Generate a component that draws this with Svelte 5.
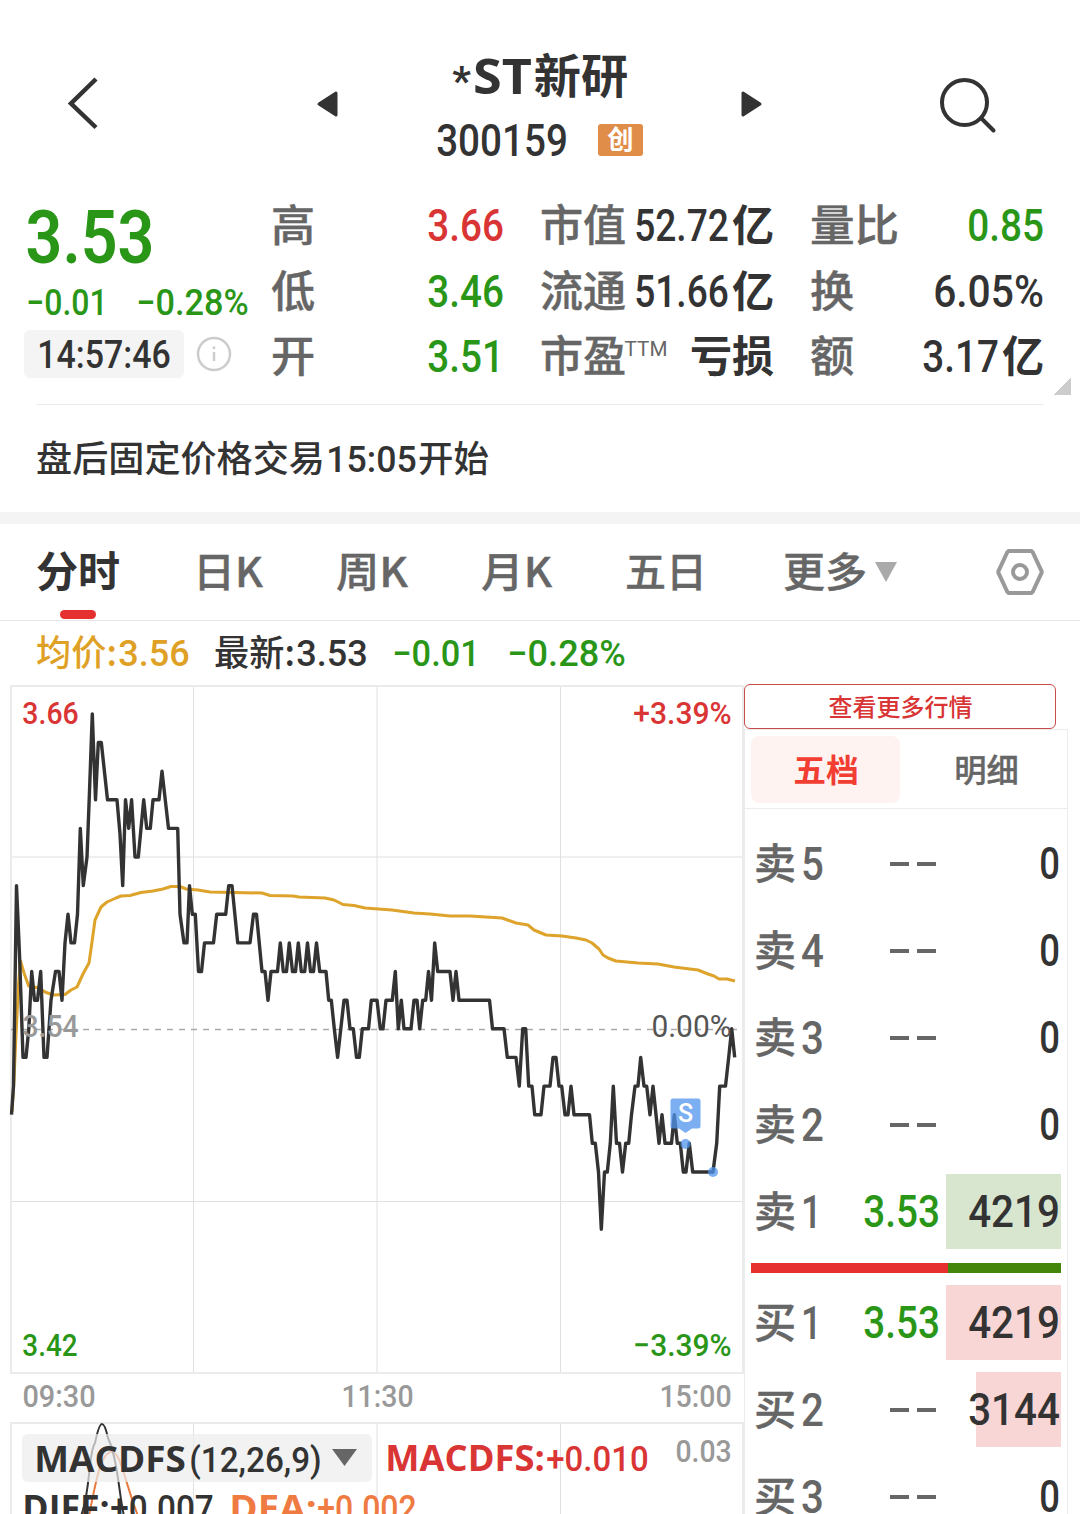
<script lang="ts">
  type Point = [number, number];

  const stats = [
    [
      { label: "高", lw: 42, value: "3.66", vw: 75, tone: "red" },
      { label: "低", lw: 42, value: "3.46", vw: 75, tone: "green" },
      { label: "开", lw: 42, value: "3.51", vw: 75, tone: "green" },
    ],
    [
      { label: "市值", lw: 84, value: "52.72", vw: 93, unit: "亿", uw: 40, tone: "dark" },
      { label: "流通", lw: 84, value: "51.66", vw: 93, unit: "亿", uw: 40, tone: "dark" },
      { label: "市盈", lw: 84, sup: "TTM", unit: "亏损", uw: 82, tone: "dark" },
    ],
    [
      { label: "量比", lw: 87, value: "0.85", vw: 75, tone: "green" },
      { label: "换", lw: 42, value: "6.05%", vw: 109, tone: "dark" },
      { label: "额", lw: 42, value: "3.17", vw: 75, unit: "亿", uw: 40, tone: "dark" },
    ],
  ];

  const asks = [
    { side: "卖", level: "5", volume: "0" },
    { side: "卖", level: "4", volume: "0" },
    { side: "卖", level: "3", volume: "0" },
    { side: "卖", level: "2", volume: "0" },
    { side: "卖", level: "1", price: "3.53", volume: "4219", depth: 115 },
  ];
  const bids = [
    { side: "买", level: "1", price: "3.53", volume: "4219", depth: 115 },
    { side: "买", level: "2", volume: "3144", depth: 85 },
    { side: "买", level: "3", volume: "0" },
  ];

  // x, ticks above or below the previous close
  const ticks: Point[] = [
    [11.5, -3], [13.5, -2], [16.5, 5], [19.5, 2.6], [23, -1], [26, -1], [28.8, 0], [31.7, 2], [34.5, 1],
    [37.5, 1], [40.7, 2], [44, -1], [47, -1], [51, 1], [55.5, 2], [59, 2], [62, 1], [65, 3], [68, 4],
    [71, 3], [74.5, 3], [77.5, 4], [80.3, 7], [83.3, 5], [87, 6], [89.5, 8.3], [92.3, 11], [95.5, 8],
    [98.3, 10], [101.3, 10], [107.5, 8], [117, 8], [120, 6.8], [122.7, 5], [125.5, 8], [128.7, 7],
    [131.6, 8], [135, 6], [138.3, 6], [143.7, 8], [146.7, 7], [150.3, 7], [153, 8], [159, 8], [162, 9],
    [168.5, 7], [177.7, 7], [180, 4], [184, 3], [187, 3], [189.5, 5], [192.3, 4], [195.3, 4],
    [198.5, 2], [201.5, 2], [204.5, 3], [213.5, 3], [216.7, 4], [225.7, 4], [228.7, 5], [232, 5],
    [237.7, 3], [250, 3], [253.5, 4], [256.5, 4], [262, 2], [265, 2], [268, 1], [271, 2], [277.5, 2],
    [280.3, 3], [283.3, 2], [286.5, 2], [289.3, 3], [292.5, 2], [295.5, 2], [298.3, 3], [301.3, 2],
    [304.7, 2], [307.5, 3], [310.5, 2], [313.5, 2], [316.5, 3], [319.7, 2], [326, 2], [328.7, 1],
    [331.3, 1], [334.3, 0], [337.6, -1], [340.8, 0], [344, 1], [347, 1], [350, 0], [353.3, 0],
    [356.5, -1], [359.3, -1], [362.3, 0], [368.5, 0], [371.3, 1], [377, 1], [380.3, 0], [383, 0],
    [386, 1], [392.3, 1], [395.3, 2], [398.3, 0], [401.3, 1], [404, 0], [411, 0], [414, 1], [417, 1],
    [419.7, 0], [422.7, 1], [425.7, 1], [428.5, 2], [431.5, 1], [434.7, 3], [437.7, 2], [450, 2],
    [453, 1], [456, 2], [459, 1], [489.5, 1], [492.5, 0], [504, 0], [507.3, -1], [516, -1],
    [519.3, -2], [522.7, 0], [525.7, 0], [528.7, -2], [532, -2], [534.7, -3], [541, -3], [544, -2],
    [550, -2], [553, -1], [556, -1], [559, -2], [561.7, -2], [565, -3], [568, -3], [571, -2],
    [574, -3], [589.5, -3], [592.3, -4], [595.3, -4], [598.5, -5], [601.3, -7], [604.5, -5],
    [607.3, -5], [610.3, -4], [613.3, -2], [616.5, -4], [619.5, -4], [622.5, -5], [625.7, -4],
    [628.7, -4], [631.5, -3], [635, -2], [638, -2], [640.7, -1], [644, -2], [646.7, -2], [650, -3],
    [653, -2], [656, -3], [659, -4], [662, -3], [665, -4], [671.5, -4], [674.3, -3], [677.3, -4],
    [680.3, -4], [683.3, -5], [686, -5], [689.3, -4], [692.7, -5], [713, -5], [716.7, -4],
    [719.7, -2], [725.5, -2], [728.7, -1], [731.7, 0], [734.7, -1],
  ];
  const average: Point[] = [
    [12, 1112], [14, 1080], [16, 1035], [18.5, 985], [20.5, 961], [24, 973], [28.7, 986], [39, 988],
    [45, 992], [53, 995], [65, 994.5], [71, 990], [77, 987], [83, 974], [89, 963], [92, 942],
    [95, 920], [101, 907], [107, 902], [116, 898], [121, 896], [130, 895.5], [141, 892.5],
    [153, 891], [163, 889], [171, 886.5], [180, 886.5], [186, 889], [198, 890], [210, 892],
    [262, 893], [270, 895.5], [293, 896], [299, 897], [325, 898], [334, 900], [343, 904.5],
    [354, 905.5], [365, 908], [392, 910], [414, 913], [430, 914], [450, 916], [470, 916], [502, 918],
    [516, 923], [528, 925], [534, 930], [546, 935], [562, 936], [576, 938], [586, 940], [592, 943],
    [599, 949], [603, 955], [608, 958], [616, 961], [638, 963], [658, 964], [674, 967], [698, 970],
    [708, 974], [714, 976], [719, 979], [727, 979], [735, 981],
  ];

  const price = ticks.map(([x, n]) => `${x},${(1028.8 - n * 28.63).toFixed(1)}`).join(" ");
  const avg = average.map((p) => p.join(",")).join(" ");
</script>

<!-- w is the inked width of the text; h its cap height -->
{#snippet num(text: string, w: number, h: number, cls = "dark")}
  {@const size = h / 0.711}
  {@const pad = size * 0.02}
  <svg class="t" width={w} height={h} aria-label={text}>
    <text class="num {cls}" x={-pad} y={h} font-size={size} textLength={w + pad * 2} lengthAdjust="spacingAndGlyphs">{text}</text>
  </svg>
{/snippet}

{#snippet han(text: string, w: number, size: number, cls = "gray")}
  {@const pad = size * 0.025}
  <svg class="t" width={w} height={size} aria-label={text}>
    <text class="han {cls}" x={-pad} y={size * 0.855} font-size={size} textLength={w + pad * 2} lengthAdjust="spacingAndGlyphs">{text}</text>
  </svg>
{/snippet}

{#snippet quoteRow(row: any, kind: string)}
  <div class="quote">
    <div class="side">{@render han(row.side, 40, 42)}{@render num(row.level, row.level === "1" ? 19 : 21, 33, "gray")}</div>
    <div class="price">
      {#if row.price}
        {@render num(row.price, 75, 31, "green")}
      {:else}
        <i class="dash"></i><i class="dash"></i>
      {/if}
    </div>
    {#if row.depth}<div class="depth {kind}" style="width: {row.depth}px"></div>{/if}
    <div class="volume">{@render num(row.volume, row.volume === "0" ? 19 : 90, 31)}</div>
  </div>
{/snippet}

<main>
  <header>
    <svg class="back" width="32" height="54" viewBox="0 0 32 54"><path d="M29 3 4 27.500l25 24" /></svg>
    <svg class="prev" width="23" height="28" viewBox="0 0 23 28"><path d="M20 3v22L3 14z" /></svg>
    <div class="name">
      <div class="title">
        <span class="star">{@render num("*", 17, 29, "bold")}</span>
        {@render num("ST", 57, 34, "bold latin")}
        {@render han("新研", 92, 47, "dark bold")}
      </div>
      <div class="code">
        {@render num("300159", 130, 31)}
        <span class="badge">{@render han("创", 25, 26, "white bold")}</span>
      </div>
    </div>
    <svg class="next" width="23" height="28" viewBox="0 0 23 28"><path d="M3 3v22l17-11z" /></svg>
    <svg class="search" width="58" height="58" viewBox="0 0 58 58"><circle cx="25.500" cy="26.500" r="22.500" /><path d="m43 43 11.500 11.500" /></svg>
  </header>

  <section class="summary">
    <div class="last">
      {@render num("3.53", 126, 53, "green heavy")}
      <div class="change">{@render num("−0.01", 80, 26, "green")}{@render num("−0.28%", 111, 26, "green")}</div>
      <div class="clock">
        <span class="time">{@render num("14:57:46", 132, 27)}</span>
        <svg width="36" height="36" viewBox="0 0 36 36"><circle cx="18" cy="18" r="16" /><path d="M18 16v9M18 10.500v2.500" /></svg>
      </div>
    </div>
    {#each stats as column}
      <div class="column">
        {#each column as s}
          <div class="stat">
            {@render han(s.label, s.lw, 43)}
            {#if s.sup}<span class="sup">{@render num(s.sup, 42, 15, "gray regular")}</span>{/if}
            <span class="value">
              {#if s.value}{@render num(s.value, s.vw, 31, s.tone)}{/if}
              {#if s.unit}{@render han(s.unit, s.uw, 43, "dark bold")}{/if}
            </span>
          </div>
        {/each}
      </div>
    {/each}
    <i class="corner"></i>
  </section>

  <section class="notice">
    {@render han("盘后固定价格交易", 287, 36, "dark")}
    {@render num("15:05", 89, 26)}
    {@render han("开始", 69, 36, "dark")}
  </section>

  <nav>
    <div class="tab active">{@render han("分时", 82, 42, "dark bold")}</div>
    <div class="tab">{@render han("日K", 68, 41)}</div>
    <div class="tab">{@render han("周K", 70, 41)}</div>
    <div class="tab">{@render han("月K", 69, 41)}</div>
    <div class="tab">{@render han("五日", 80, 41)}</div>
    <div class="tab more">{@render han("更多", 82, 41)}<svg width="22" height="20" viewBox="0 0 22 20"><path d="M0 0h22L11 20z" /></svg></div>
    <svg class="settings" width="50" height="48" viewBox="0 0 50 48"><path d="M14 3h22q1 0 1.700 1.200L46.300 22.500q.8 1.500 0 3L37.700 43.800Q37 45 36 45H14q-1 0-1.700-1.200L3.700 25.500q-.8-1.500 0-3L12.300 4.200Q13 3 14 3z" /><circle cx="25" cy="24" r="7" /></svg>
  </nav>

  <div class="legend">
    {@render han("均价:", 79, 36, "amber")}{@render num("3.56", 70, 26, "amber")}
    <span class="latest">{@render han("最新:", 79, 36, "dark")}{@render num("3.53", 70, 26)}</span>
    <span class="d1">{@render num("−0.01", 86, 26, "green")}</span>
    <span class="d2">{@render num("−0.28%", 117, 26, "green")}</span>
  </div>

  <div class="body">
    <div class="charts">
      <div class="chart">
        <svg class="plot" width="744" height="690" viewBox="0 685 744 690">
          <g class="grid">
            <path d="M193.500 686v687M377 686v687M560.500 686v687M11 857h732M11 1201.500h732" />
            <path class="frame" d="M11 686h732v687H11z" />
          </g>
          <path class="zero" d="M11 1029.500h732" />
          <polyline class="avg" points={avg} />
          <polyline class="line" points={price} />
          <g class="trade">
            <circle cx="685.500" cy="1144" r="5" />
            <circle cx="713" cy="1172" r="5" />
            <path d="M673 1098.500h25q2.500 0 2.500 2.500v25q0 2.500-2.500 2.500h-6l-6.500 4.500-6.500-4.500h-6q-2.500 0-2.500-2.500v-25q0-2.500 2.500-2.500z" />
            <text x="685.500" y="1122">S</text>
          </g>
        </svg>
        <div class="scale">
          <div>{@render num("3.66", 55, 22.5, "red")}{@render num("+3.39%", 97, 22.5, "red")}</div>
          <div class="mid">{@render num("3.54", 55, 22, "mute")}{@render num("0.00%", 79, 22, "soft")}</div>
          <div>{@render num("3.42", 54, 22.5, "green")}{@render num("−3.39%", 97, 22.5, "green")}</div>
        </div>
      </div>
      <div class="times">
        {@render num("09:30", 72, 22, "mute")}
        {@render num("11:30", 71, 22, "mute")}
        {@render num("15:00", 71, 22, "mute")}
      </div>
      <div class="macd">
        <svg class="plot" width="744" height="92" viewBox="0 1422 744 92">
          <path class="grid" d="M193.500 1423v91M377 1423v91M560.500 1423v91" />
          <path class="grid frame" d="M11 1514v-91h732v91" />
          <path class="dea" d="M89 1516C96 1480 101 1453 111 1452S124 1480 138 1516" />
          <path class="dif" d="M81 1516C91 1490 88 1453 95 1443Q99 1424 102 1424T108 1438C118 1460 119 1495 124 1516" />
        </svg>
        <div class="indicator">
          <div class="picker">
            {@render num("MACDFS", 150, 26, "bold latin")}
            {@render num("(12,26,9)", 131, 25)}
            <svg width="25" height="17" viewBox="0 0 25 17"><path d="M0 0h25L12.500 17z" /></svg>
          </div>
          {@render num("MACDFS:", 158, 26, "red bold latin")}
          {@render num("+0.010", 101, 25, "red")}
          <span class="max">{@render num("0.03", 55, 22, "mute")}</span>
        </div>
        <div class="values">
          {@render num("DIFF:", 86, 26, "bold latin")}{@render num("+0.007", 102, 26)}
          <span>{@render num("DEA:", 86, 26, "orange bold latin")}{@render num("+0.002", 98, 26, "orange")}</span>
        </div>
      </div>
    </div>

    <aside>
      <div class="all">{@render han("查看更多行情", 143, 24, "red")}</div>
      <div class="book">
        <div class="modes">
          <div class="mode on">{@render han("五档", 64, 32, "hot bold")}</div>
          <div class="mode">{@render han("明细", 63, 32)}</div>
        </div>
        <div class="asks">
          {#each asks as row}{@render quoteRow(row, "ask")}{/each}
        </div>
        <div class="ratio"><i></i></div>
        {#each bids as row}{@render quoteRow(row, "bid")}{/each}
      </div>
    </aside>
  </div>
</main>

<style>
  :global(body) {
    margin: 0;
    background: #fff;
  }
  main {
    width: 1080px;
    height: 1514px;
    overflow: hidden;
    background: #fff;
    font-family: Roboto, "Noto Sans CJK SC", sans-serif;
  }
  svg {
    display: block;
    flex-shrink: 0;
    fill: none;
  }
  .t {
    overflow: visible;
  }
  .num {
    font-family: Roboto, sans-serif;
    font-weight: 500;
  }
  .han {
    font-family: "Noto Sans CJK SC", sans-serif;
    font-weight: 500;
  }
  text {
    fill: #333;
  }
  text.regular { font-weight: 400; }
  text.bold { font-weight: 700; }
  text.heavy { font-weight: 600; }
  text.latin { font-family: "Open Sans", sans-serif; }
  text.gray { fill: #666; }
  text.mute { fill: #999; }
  text.soft { fill: #555; font-weight: 400; }
  text.red { fill: #d93535; }
  text.hot { fill: #f23d33; }
  text.green { fill: #2a9618; }
  text.amber { fill: #dfa125; }
  text.orange { fill: #ef7a42; }
  text.white { fill: #fff; }
  /* slight extra body on the regular characters */
  text.han.gray {
    stroke: #666;
    stroke-width: 0.4px;
  }

  header {
    display: flex;
    height: 190px;
    box-sizing: border-box;
    padding-top: 53px;
    align-items: flex-start;
  }
  .back {
    margin: 23px 0 0 67px;
    stroke: #333;
    stroke-width: 4.500;
  }
  .prev,
  .next {
    fill: #333;
    stroke: #333;
    stroke-width: 3;
    stroke-linejoin: round;
    margin-top: 37px;
  }
  .prev {
    margin-left: 217px;
  }
  .next {
    margin-left: 96px;
  }
  .name {
    width: 207px;
    margin-left: 98px;
  }
  .title,
  .code {
    display: flex;
    align-items: center;
  }
  .title {
    height: 47px;
    padding-left: 16px;
    gap: 4px;
  }
  .star {
    margin-top: 8px;
  }
  .code {
    margin-top: 22px;
    height: 36px;
    gap: 31px;
  }
  .badge {
    display: flex;
    align-items: center;
    justify-content: center;
    width: 45px;
    height: 32px;
    border-radius: 3px;
    background: #df8d48;
  }
  .search {
    margin: 23px 0 0 176px;
    stroke: #333;
    stroke-width: 4;
    stroke-linecap: round;
  }

  .summary {
    position: relative;
    display: flex;
    height: 214px;
    margin: 0 36px;
    border-bottom: 1px solid #ebebeb;
  }
  .last {
    width: 236px;
    margin-left: -9px;
    padding-top: 20px;
  }
  .change {
    display: flex;
    gap: 30px;
    margin-top: 26px;
  }
  .clock {
    display: flex;
    align-items: center;
    margin: 15px 0 0 -3px;
    gap: 12px;
  }
  .time {
    display: flex;
    align-items: center;
    justify-content: center;
    width: 160px;
    height: 48px;
    border-radius: 6px;
    background: #f4f4f4;
  }
  .clock > svg {
    stroke: #ccc;
    stroke-width: 2.500;
  }
  .column {
    width: 231px;
    margin-left: 9px;
  }
  .column + .column {
    width: 232px;
    margin-left: 38px;
  }
  .stat {
    display: flex;
    align-items: center;
    height: 65.500px;
    padding-top: 6px;
    box-sizing: border-box;
  }
  .sup {
    margin-bottom: 16px;
  }
  .value {
    display: flex;
    align-items: center;
    gap: 5px;
    margin-left: auto;
  }
  .corner {
    position: absolute;
    right: -27px;
    bottom: 9px;
    width: 18px;
    height: 18px;
    background: linear-gradient(135deg, transparent 50%, #ccc 50%);
  }

  .notice {
    display: flex;
    align-items: center;
    gap: 3px;
    height: 107px;
    padding-left: 37px;
    border-bottom: 12px solid #f4f4f4;
  }

  nav {
    display: flex;
    align-items: center;
    height: 96px;
    padding-left: 37px;
    border-bottom: 1px solid #e6e6e6;
  }
  .tab {
    position: relative;
    margin-right: 75px;
  }
  .tab.active::after {
    content: "";
    position: absolute;
    left: 23px;
    top: 59px;
    width: 36px;
    height: 9px;
    border-radius: 4.500px;
    background: #e5302f;
  }
  .tab.more {
    display: flex;
    align-items: center;
    gap: 9px;
    margin: 0 0 0 3px;
  }
  .more > svg:last-child {
    fill: #aaa;
  }
  .settings {
    margin-left: 98px;
    stroke: #999;
    stroke-width: 4;
  }

  .legend {
    display: flex;
    align-items: center;
    height: 64px;
    padding-left: 37px;
    gap: 3px;
  }
  .legend span {
    display: flex;
    align-items: center;
    gap: 3px;
  }
  .latest { margin-left: 23px; }
  .d1 { margin-left: 23px; }
  .d2 { margin-left: 26px; }

  .body {
    display: flex;
    align-items: flex-start;
    height: 830px;
  }
  .charts {
    width: 744px;
  }
  .chart,
  .macd {
    position: relative;
  }
  .grid {
    stroke: #e0e0e0;
  }
  .frame {
    stroke: #ebebeb;
    stroke-width: 2;
  }
  .zero {
    stroke: #aaa;
    stroke-width: 1.500;
    stroke-dasharray: 6 6;
  }
  .avg,
  .line {
    stroke-width: 3;
    stroke-linejoin: round;
  }
  .avg { stroke: #dda32b; }
  .line {
    stroke: #333;
    stroke-width: 3.400;
  }
  .trade {
    fill: #4f94ec;
    fill-opacity: 0.75;
  }
  .trade text {
    fill: #fff;
    fill-opacity: 1;
    font: 500 25px Roboto, sans-serif;
    text-anchor: middle;
  }
  .scale {
    position: absolute;
    inset: 16px 13px 20px 23px;
    display: flex;
    flex-direction: column;
    justify-content: space-between;
  }
  .scale div {
    display: flex;
    justify-content: space-between;
  }
  .scale .mid {
    margin-top: -5px;
  }
  .times {
    display: flex;
    justify-content: space-between;
    padding: 10px 13px 15px 23px;
  }
  .macd {
    height: 92px;
  }
  .macd .plot {
    position: absolute;
    left: 0;
    top: 0;
  }
  .dif,
  .dea {
    stroke: #333;
    stroke-width: 2;
  }
  .dea { stroke: #e8793f; }
  .indicator {
    position: relative;
    display: flex;
    align-items: center;
    padding: 12px 13px 0 22px;
  }
  .picker {
    display: flex;
    align-items: center;
    box-sizing: border-box;
    width: 350px;
    height: 48px;
    margin-right: 14px;
    padding: 2px 0 0 13px;
    gap: 5px;
    border-radius: 6px;
    background: rgba(236, 236, 236, 0.7);
  }
  .picker > svg:last-child {
    margin: -4px 0 0 6px;
    fill: #666;
  }
  .indicator > :global(svg + svg) {
    margin-left: 3px;
  }
  .max {
    margin: -15px 0 0 auto;
  }
  .values {
    position: relative;
    display: flex;
    gap: 2px;
    padding: 13px 0 0 23px;
  }
  .values span {
    display: flex;
    gap: 2px;
    margin-left: 15px;
  }

  aside {
    width: 324px;
    margin-top: -1px;
  }
  .all {
    display: flex;
    align-items: center;
    justify-content: center;
    box-sizing: border-box;
    width: 312px;
    height: 45px;
    border: 1.500px solid #c94a4a;
    border-radius: 6px;
  }
  .book {
    box-sizing: border-box;
    height: 800px;
    border: solid #ececec;
    border-width: 1px 1px 0 1px;
  }
  .modes {
    display: flex;
    height: 78px;
    padding: 0 6px;
    align-items: center;
    border-bottom: 1px solid #ececec;
  }
  .mode {
    display: flex;
    align-items: center;
    justify-content: center;
    width: 149px;
    height: 67px;
    padding-top: 4px;
    box-sizing: border-box;
    border-radius: 8px;
  }
  .mode.on {
    background: #fff3f2;
  }
  .mode + .mode {
    margin-left: 12px;
  }
  .asks {
    padding-top: 11px;
  }
  .quote {
    position: relative;
    display: flex;
    align-items: center;
    height: 87px;
    padding: 0 8px 0 10px;
  }
  .side {
    display: flex;
    align-items: center;
    gap: 7px;
    width: 84px;
  }
  .price {
    display: flex;
    align-items: center;
    justify-content: flex-end;
    gap: 8px;
    width: 100px;
  }
  .dash {
    width: 19px;
    height: 4px;
    background: #666;
  }
  .dash:last-child {
    margin-right: 3px;
  }
  .depth {
    position: absolute;
    right: 6px;
    top: 6px;
    height: 75px;
  }
  .ask { background: #d9e6cf; }
  .bid { background: #f9d6d6; }
  .volume {
    position: relative;
    margin-left: auto;
  }
  .ratio {
    height: 10px;
    margin: 8px 6px 6px;
    background: #44860c;
  }
  .ratio i {
    display: block;
    width: 197px;
    height: 10px;
    background: #e5302f;
  }
</style>
